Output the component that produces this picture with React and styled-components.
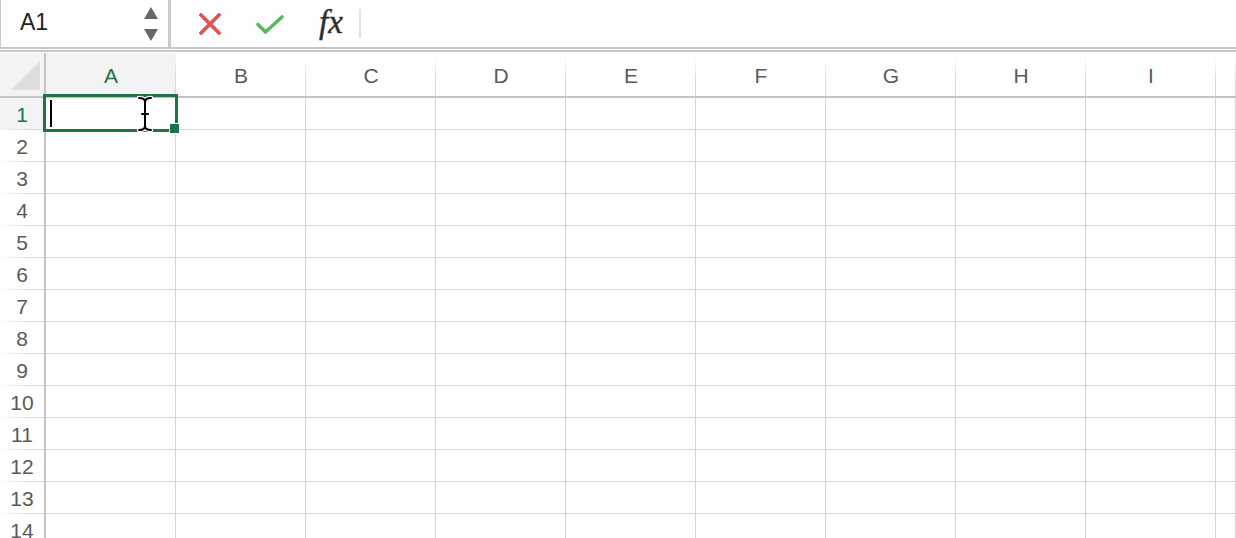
import React from 'react';
import styled, { createGlobalStyle } from 'styled-components';

const GREEN = '#217346';
const COLS = ['A', 'B', 'C', 'D', 'E', 'F', 'G', 'H', 'I', 'J'];
const ROWS = Array.from({ length: 14 }, (_, i) => i + 1);

const Global = createGlobalStyle`
  html, body {
    margin: 0;
    padding: 0;
    background: #fff;
    overflow: hidden;
  }
  body {
    font-family: "Liberation Sans", Arial, sans-serif;
  }
`;

function App() {
    return (
        <Page>
            <Global />
            <TopBar>
                <NameBox>
                    <CellRef>A1</CellRef>
                    <Spinner>
                        <Arrow $up />
                        <Arrow />
                    </Spinner>
                </NameBox>
                <Tools>
                    <Tool $left={28}>
                        <svg width="22" height="22" viewBox="0 0 22 22">
                            <path d="M2 2 L20 20 M20 2 L2 20" stroke="#e05353" strokeWidth="3.6" strokeLinecap="square" />
                        </svg>
                    </Tool>
                    <Tool $left={35}>
                        <svg width="28" height="19" viewBox="0 0 28 19">
                            <path d="M2 9.5 L9.5 17 L26 2" stroke="#5cb85c" strokeWidth="3.6" fill="none" strokeLinecap="round" strokeLinejoin="round" />
                        </svg>
                    </Tool>
                    <Fx>fx</Fx>
                    <ToolDivider />
                </Tools>
            </TopBar>
            <DoubleRule />
            <Sheet>
                <Grid>
                    <Corner>
                        <svg width="44" height="43" viewBox="0 0 44 43">
                            <polygon points="11,37 40,37 40,8" fill="#dedede" />
                        </svg>
                    </Corner>
                    {COLS.map((c) => (
                        <ColHeader key={c} $active={c === 'A'}>{c === 'J' ? '' : c}</ColHeader>
                    ))}
                    {ROWS.map((r) => (
                        <React.Fragment key={r}>
                            <RowHeader $active={r === 1}>{r}</RowHeader>
                            {COLS.map((c) => (
                                <Cell key={c} />
                            ))}
                        </React.Fragment>
                    ))}
                </Grid>
                <Selection />
                <FillHandle />
                <Caret />
                <IBeam>
                    <svg width="18" height="38" viewBox="0 0 18 38">
                        <g fill="none" strokeLinecap="round">
                            <path d="M3 3 C6 3 9 4 9 7 C9 4 12 3 15 3 M9 7 V31 M3 35 C6 35 9 34 9 31 C9 34 12 35 15 35 M6 19 H12" stroke="#fff" strokeWidth="4.5" />
                            <path d="M3 3 C6 3 9 4 9 7 C9 4 12 3 15 3 M9 7 V31 M3 35 C6 35 9 34 9 31 C9 34 12 35 15 35 M6 19 H12" stroke="#000" strokeWidth="2" />
                        </g>
                    </svg>
                </IBeam>
            </Sheet>
        </Page>
    );
}

export default App;

const Page = styled.div`
  width: 1236px;
  height: 538px;
  overflow: hidden;
  background: #fff;
`;

const TopBar = styled.div`
  display: flex;
  align-items: stretch;
  height: 47px;
`;

const NameBox = styled.div`
  width: 171px;
  display: flex;
  align-items: center;
  justify-content: space-between;
  border-left: 1px solid #cdcdcd;
  border-right: 3px solid #cbcbcb;
  padding: 0 10px 0 19px;
  box-sizing: border-box;
`;

const CellRef = styled.span`
  font-size: 23px;
  color: #222;
  margin-top: -3px;
`;

const Spinner = styled.div`
  display: flex;
  flex-direction: column;
  justify-content: space-between;
  height: 34px;
`;

const Arrow = styled.div`
  width: 0;
  height: 0;
  border-left: 7px solid transparent;
  border-right: 7px solid transparent;
  ${(p) => (p.$up ? 'border-bottom: 12px solid #666;' : 'border-top: 12px solid #666;')}
`;

const Tools = styled.div`
  display: flex;
  align-items: center;
  flex: 1;
`;

const Tool = styled.div`
  display: flex;
  align-items: center;
  margin-left: ${(p) => p.$left}px;
  margin-top: 1px;
`;

const Fx = styled.span`
  margin-left: 35px;
  font-family: "Liberation Serif", "DejaVu Serif", serif;
  font-style: italic;
  font-size: 33px;
  color: #2e2e2e;
  line-height: 1;
  margin-top: -3px;
  -webkit-text-stroke: 0.4px #2e2e2e;
`;

const ToolDivider = styled.div`
  width: 2px;
  height: 29px;
  background: #e2e2e2;
  margin-left: 16px;
`;

const DoubleRule = styled.div`
  height: 1px;
  border-top: 2px solid #c6c6c6;
  border-bottom: 2px solid #c6c6c6;
  margin-bottom: 1px;
`;

const Sheet = styled.div`
  position: relative;
`;

const Grid = styled.div`
  display: grid;
  grid-template-columns: 46px repeat(9, 130px) 1fr;
  grid-template-rows: 45px repeat(14, 32px);
  font-family: "Liberation Sans", Arial, sans-serif;
`;

const HeaderBase = styled.div`
  display: flex;
  align-items: center;
  justify-content: center;
  box-sizing: border-box;
  font-size: 21px;
  position: relative;
`;

const Corner = styled(HeaderBase)`
  background: #f3f3f3;
  border-right: 2px solid #c4c4c4;
  border-bottom: 2px solid #c4c4c4;
  align-items: flex-start;
  justify-content: flex-start;
`;

const ColHeader = styled(HeaderBase)`
  background: ${(p) => (p.$active ? '#f3f3f3' : '#fff')};
  color: ${(p) => (p.$active ? GREEN : '#5a5a5a')};
  border-bottom: 2px solid #c4c4c4;
  padding-top: 3px;
  &::after {
    content: '';
    position: absolute;
    right: 0;
    top: 4px;
    bottom: 0;
    width: 1px;
    background: linear-gradient(to bottom, rgba(220, 220, 220, 0), #d8d8d8 60%);
  }
`;

const RowHeader = styled(HeaderBase)`
  background: ${(p) => (p.$active ? '#f3f3f3' : '#fff')};
  color: ${(p) => (p.$active ? GREEN : '#5a5a5a')};
  border-right: 2px solid #c4c4c4;
  padding-top: 2px;
  &::after {
    content: '';
    position: absolute;
    left: 0;
    right: 0;
    bottom: 0;
    height: 1px;
    background: linear-gradient(to right, rgba(220, 220, 220, 0), #d6d6d6 70%);
  }
`;

const Cell = styled.div`
  border-right: 1px solid #d5d5d5;
  border-bottom: 1px solid #d5d5d5;
`;

const Selection = styled.div`
  position: absolute;
  left: 43px;
  top: 41px;
  width: 135px;
  height: 38px;
  box-sizing: border-box;
  border: 3px solid ${GREEN};
`;

const FillHandle = styled.div`
  position: absolute;
  left: 169px;
  top: 70px;
  width: 9px;
  height: 9px;
  background: ${GREEN};
  border: 1px solid #fff;
`;

const Caret = styled.div`
  position: absolute;
  left: 50px;
  top: 47px;
  width: 2px;
  height: 27px;
  background: #000;
`;

const IBeam = styled.div`
  position: absolute;
  left: 136px;
  top: 42px;
  line-height: 0;
`;
